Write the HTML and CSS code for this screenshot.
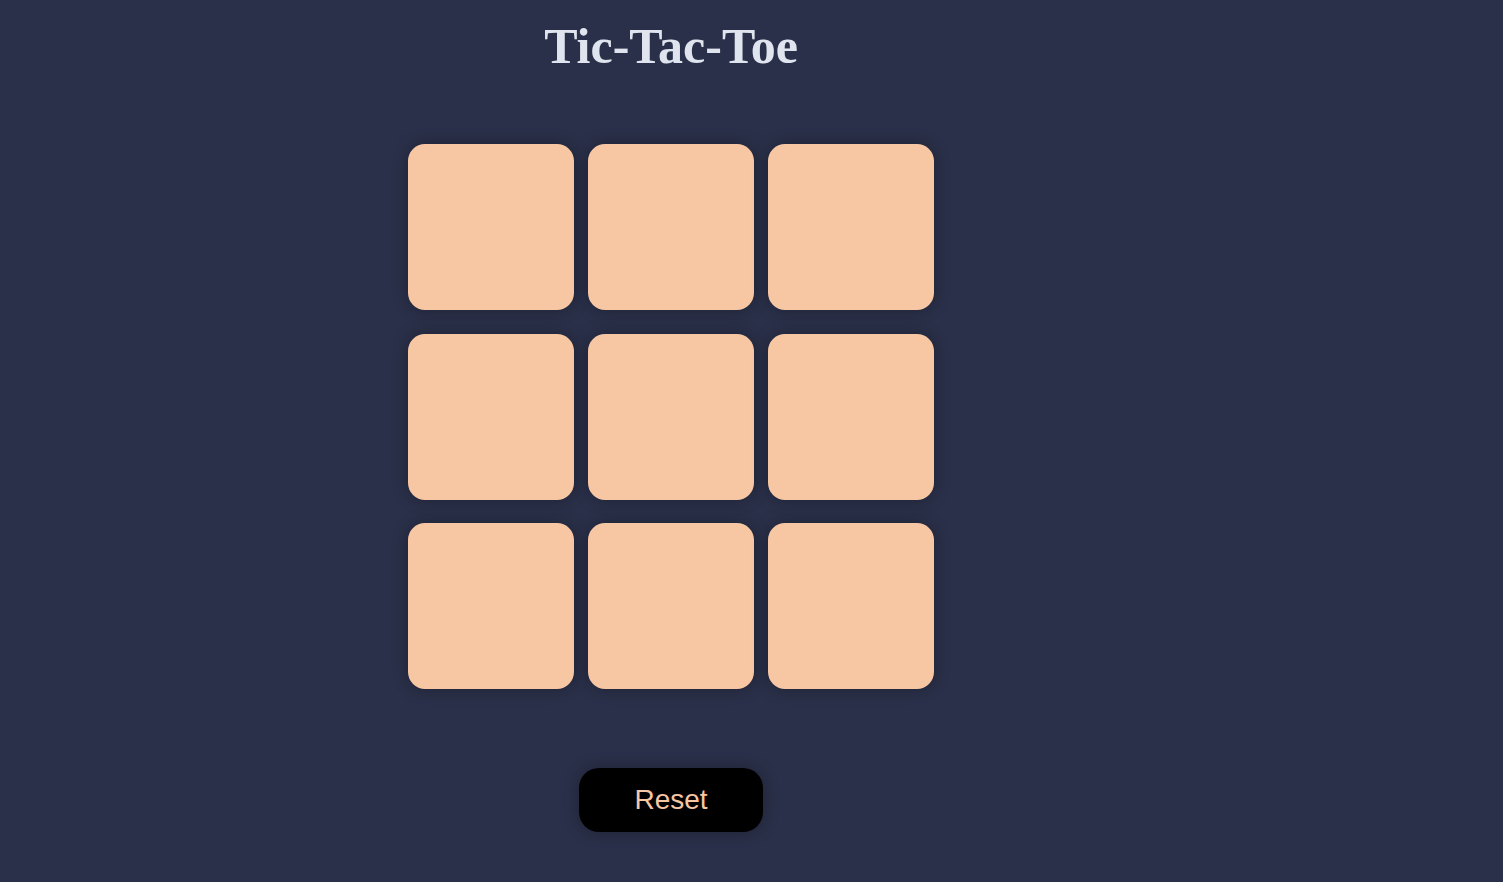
FILE: index.html
```html
<!DOCTYPE html>
<html lang="en">
<head>
<meta charset="UTF-8">
<title>Tic-Tac-Toe</title>
<link rel="stylesheet" href="styles.css">
</head>
<body>
<main class="main">
  <h1 class="title">Tic-Tac-Toe</h1>
  <div class="game">
    <button class="box"></button>
    <button class="box"></button>
    <button class="box"></button>
    <button class="box"></button>
    <button class="box"></button>
    <button class="box"></button>
    <button class="box"></button>
    <button class="box"></button>
    <button class="box"></button>
  </div>
  <button class="reset">Reset</button>
</main>
</body>
</html>
```
FILE: styles.css
```css
html, body {
  margin: 0;
  padding: 0;
  background: #2a3049;
  height: 100%;
}
.main {
  width: 1342px;
  padding-top: 21px;
  display: flex;
  flex-direction: column;
  align-items: center;
}
.title {
  margin: 0;
  font-family: "Liberation Serif", "Times New Roman", serif;
  font-weight: bold;
  font-size: 50px;
  line-height: 50px;
  color: #dfe4ee;
}
.game {
  margin-top: 73px;
  display: grid;
  grid-template-columns: repeat(3, 166px);
  grid-auto-rows: 166px;
  column-gap: 14px;
  row-gap: 23.5px;
}
.box {
  border: none;
  padding: 0;
  background: #f7c6a3;
  border-radius: 17px;
  box-shadow: 0 0 16px rgba(0, 0, 0, 0.3);
}
.reset {
  margin-top: 79px;
  width: 184px;
  height: 64px;
  border: none;
  border-radius: 20px;
  background: #000;
  color: #f7c6a3;
  font-family: "Liberation Sans", Arial, sans-serif;
  font-size: 28px;
  box-shadow: 0 0 16px rgba(0, 0, 0, 0.3);
}
```
